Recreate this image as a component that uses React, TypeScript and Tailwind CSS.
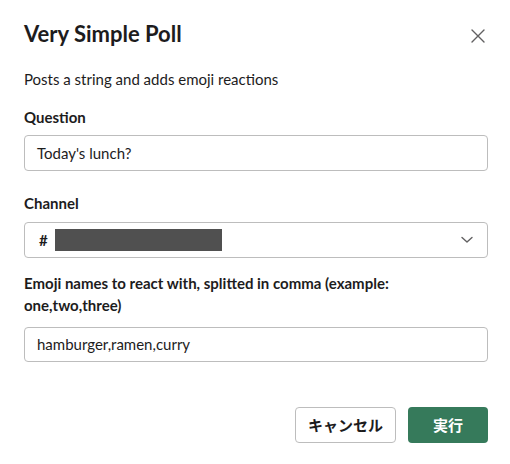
import React from "react";

export default function App() {
  const font = { fontFamily: 'Lato, "Noto Sans CJK JP", sans-serif' };
  return (
    <div className="w-[510px] h-[464px] bg-white text-[#1d1c1d] relative" style={font}>
      <div className="flex items-center justify-between pl-6 pr-[25px] pt-[20px]">
        <h1 className="text-[22px] font-bold leading-[28px]">Very Simple Poll</h1>
        <svg width="14" height="14" viewBox="0 0 14 14" className="mt-[4px]">
          <path d="M1 1L13 13M13 1L1 13" stroke="#616061" strokeWidth="1.4" strokeLinecap="round" />
        </svg>
      </div>
      <div className="pl-6 pr-[22px]">
        <p className="text-[15px] leading-[22px] mt-[20px]">Posts a string and adds emoji reactions</p>

        <div className="mt-[16px] text-[15px] font-bold leading-[22px]">Question</div>
        <div className="mt-[7px] h-[36px] border border-[#bdbdbd] rounded-[4px] flex items-center px-[12px] text-[15px]">
          Today's lunch?
        </div>

        <div className="mt-[21px] text-[15px] font-bold leading-[22px]">Channel</div>
        <div className="mt-[8px] h-[36px] border border-[#bdbdbd] rounded-[4px] flex items-center pl-[14px] pr-[14px] text-[15px]">
          <span className="font-bold">#</span>
          <span className="ml-[7px] w-[167px] h-[22px] bg-[#505050]" />
          <span className="flex-1" />
          <svg width="12" height="8" viewBox="0 0 12 8">
            <path d="M1 1.5L6 6L11 1.5" stroke="#616061" strokeWidth="1.4" fill="none" strokeLinecap="round" strokeLinejoin="round" />
          </svg>
        </div>

        <div className="mt-[14px] text-[15px] font-bold leading-[22px]">
          Emoji names to react with, splitted in comma (example: one,two,three)
        </div>
        <div className="mt-[11px] h-[35px] border border-[#bdbdbd] rounded-[4px] flex items-center px-[12px] text-[15px]">
          hamburger,ramen,curry
        </div>

        <div className="mt-[45px] flex justify-end gap-[12px]">
          <button className="h-[36px] w-[101px] border border-[#bdbdbd] rounded-[4px] bg-white text-[15px] font-bold">
            キャンセル
          </button>
          <button className="h-[36px] w-[80px] rounded-[4px] bg-[#367a5b] text-white text-[15px] font-bold">
            実行
          </button>
        </div>
      </div>
    </div>
  );
}
